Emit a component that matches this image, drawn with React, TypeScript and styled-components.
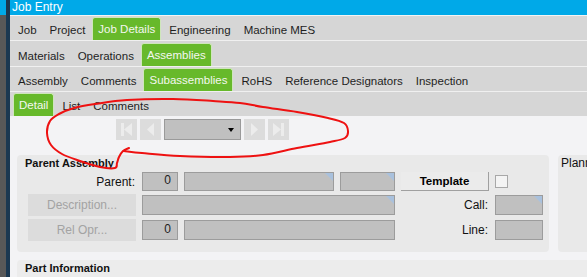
import React from "react";
import styled, { createGlobalStyle, css } from "styled-components";

const GlobalStyle = createGlobalStyle`
  html, body {
    margin: 0;
    padding: 0;
    background: #f3f3f5;
  }
  body {
    font-family: "Liberation Sans", Arial, sans-serif;
  }
  * {
    box-sizing: border-box;
  }
`;

const Screen = styled.div`
  position: relative;
  display: flex;
  width: 587px;
  height: 277px;
  overflow: hidden;
`;

const EdgeStrip = styled.div`
  width: 6px;
  display: flex;
  flex-direction: column;
`;

const EdgeTop = styled.div`
  height: 15px;
  background: #00a9e8;
`;

const EdgeRest = styled.div`
  flex: 1;
  background: #585858;
`;

const EdgeLine = styled.div`
  width: 4px;
  background: #1b3851;
`;

const Main = styled.div`
  flex: 1;
  min-width: 0;
  display: flex;
  flex-direction: column;
`;

const TitleBar = styled.div`
  height: 16px;
  padding-left: 2px;
  background: #00a9e8;
  border-bottom: 1px solid #f4f4f4;
  color: #ffffff;
  font-size: 12px;
  line-height: 15px;
`;

const TabRow = styled.div<{ $last?: boolean; $indent?: number }>`
  height: ${(p) => (p.$last ? 25 : 26)}px;
  display: flex;
  align-items: flex-end;
  gap: 1px;
  padding-left: ${(p) => p.$indent ?? 2}px;
  background: #d6d6d6;
  border-bottom: ${(p) => (p.$last ? "none" : "1px solid #f0f0f0")};
  white-space: nowrap;
`;

const Tab = styled.div<{ $active?: boolean }>`
  height: 23px;
  display: flex;
  align-items: center;
  padding: 3px 6px 0;
  font-size: 11.5px;
  color: #1e1e1e;

  ${(p) =>
    p.$active &&
    css`
      padding: 0 5px;
      margin: 0 1px 0 0;
      background: #67b92b;
      color: #f4f7f0;
      border: 1px solid #cfe6bc;
      border-bottom: none;
      border-radius: 3px 3px 0 0;
    `}
`;

const Content = styled.div`
  flex: 1;
  display: flex;
  flex-direction: column;
  padding-top: 3px;
  background: #f3f3f5;
`;

const NavBar = styled.div`
  display: flex;
  gap: 3px;
  height: 21px;
  padding-left: 106px;
`;

const NavButton = styled.div`
  width: 21px;
  height: 21px;
  background: #dcdcdc;
  display: flex;
  align-items: center;
  justify-content: center;
`;

const Dropdown = styled.div`
  width: 77px;
  height: 21px;
  display: flex;
  align-items: center;
  justify-content: flex-end;
  padding-right: 6px;
  background: #c0c0c0;
  border: 1px solid #9a9a9a;
`;

const DropArrow = styled.div`
  width: 0;
  height: 0;
  border-left: 3.5px solid transparent;
  border-right: 3.5px solid transparent;
  border-top: 4px solid #000000;
  margin-top: 1px;
`;

const GroupRow = styled.div`
  display: flex;
  gap: 9px;
  height: 97px;
  margin-top: 15px;
  padding-left: 7px;
`;

const GroupBox = styled.div<{ $width?: number }>`
  ${(p) => (p.$width ? `width: ${p.$width}px;` : "flex: 1; margin-right: -10px;")}
  flex-shrink: 0;
  overflow: hidden;
  background: #e9e9e9;
  border-radius: 4px;
`;

const GroupTitle = styled.div<{ $plain?: boolean }>`
  height: 17px;
  padding: 1px 0 0 ${(p) => (p.$plain ? 3 : 8)}px;
  font-size: ${(p) => (p.$plain ? 12 : 11)}px;
  font-weight: ${(p) => (p.$plain ? 400 : 700)};
  line-height: 14px;
  color: #111111;
  white-space: nowrap;
`;

const FormGrid = styled.div`
  display: grid;
  grid-template-columns: 108px 36px 150px 55px 88px 48px;
  grid-template-rows: 19px 22px 22px;
  column-gap: 6px;
  row-gap: 3px;
  padding-left: 11px;
`;

const FieldLabel = styled.div`
  align-self: center;
  text-align: right;
  padding-right: 1px;
  font-size: 12px;
  color: #111111;
`;

const Field = styled.div<{ $corner?: boolean; $col?: string; $tall?: boolean }>`
  position: relative;
  grid-column: ${(p) => p.$col ?? "auto"};
  align-self: center;
  height: ${(p) => (p.$tall ? 20 : 19)}px;
  padding-right: 6px;
  background: #c0c0c0;
  border: 1px solid #9c9c9c;
  font-size: 12px;
  line-height: ${(p) => (p.$tall ? 17 : 15)}px;
  text-align: right;
  color: #222222;

  ${(p) =>
    p.$corner &&
    css`
      &::after {
        content: "";
        position: absolute;
        top: 0;
        right: 0;
        border-style: solid;
        border-width: 0 8px 8px 0;
        border-color: transparent #a9c1dd transparent transparent;
      }
    `}
`;

const ActionButton = styled.div`
  display: flex;
  align-items: center;
  justify-content: center;
  background: #dcdcdc;
  color: #a3a3a3;
  font-size: 12px;
`;

const TemplateButton = styled.div`
  display: flex;
  align-items: center;
  justify-content: center;
  background: #ebebeb;
  border-right: 1px solid #a0a0a0;
  border-bottom: 1px solid #a0a0a0;
  font-size: 11.5px;
  font-weight: 700;
  color: #000000;
`;

const CheckBox = styled.div`
  width: 13px;
  height: 13px;
  align-self: center;
  background: #f4f4f4;
  border: 1px solid #a8a8a8;
`;

const PartGroup = styled.div`
  flex: 1;
  margin: 8px 0 0 7px;
  background: #ececec;
  border-radius: 4px 0 0 0;
`;

const Annotation = styled.svg`
  position: absolute;
  left: 0;
  top: 0;
  pointer-events: none;
`;

// hand-drawn loop around the record navigator
const loop: [number, number][] = [
  [129, 148], [123, 151], [119, 157], [117, 163], [115, 168], [100, 167],
  [80, 161], [62, 154], [51, 145], [47, 133], [50, 121], [59, 114],
  [74, 108], [95, 104], [127, 100], [173, 99], [213, 101], [240, 103],
  [263, 107], [297, 112], [328, 118], [344, 123], [348, 131], [345, 138],
  [330, 142], [297, 148], [263, 155], [230, 157], [180, 156], [142, 153],
  [124, 151],
];

function smooth(p: [number, number][]) {
  let d = `M${p[0][0]},${p[0][1]}`;
  for (let i = 0; i < p.length - 1; i++) {
    const p0 = p[i - 1] ?? p[i];
    const p1 = p[i];
    const p2 = p[i + 1];
    const p3 = p[i + 2] ?? p2;
    const c1x = p1[0] + (p2[0] - p0[0]) / 6;
    const c1y = p1[1] + (p2[1] - p0[1]) / 6;
    const c2x = p2[0] - (p3[0] - p1[0]) / 6;
    const c2y = p2[1] - (p3[1] - p1[1]) / 6;
    d += ` C${c1x.toFixed(1)},${c1y.toFixed(1)} ${c2x.toFixed(1)},${c2y.toFixed(1)} ${p2[0]},${p2[1]}`;
  }
  return d;
}

const glyph = "#ececec";

function NavIcon({ kind }: { kind: "first" | "prev" | "next" | "last" }) {
  return (
    <svg width="21" height="21" viewBox="0 0 21 21">
      {kind === "first" && (
        <>
          <rect x="5" y="4" width="3" height="13" fill={glyph} />
          <polygon points="16,4 8,10.5 16,17" fill={glyph} />
        </>
      )}
      {kind === "prev" && <polygon points="14,4 7,10.5 14,17" fill={glyph} />}
      {kind === "next" && <polygon points="7,4 14,10.5 7,17" fill={glyph} />}
      {kind === "last" && (
        <>
          <polygon points="5,4 13,10.5 5,17" fill={glyph} />
          <rect x="13" y="4" width="3" height="13" fill={glyph} />
        </>
      )}
    </svg>
  );
}

export default function App() {
  return (
    <>
      <GlobalStyle />
      <Screen>
        <EdgeStrip>
          <EdgeTop />
          <EdgeRest />
        </EdgeStrip>
        <EdgeLine />
        <Main>
          <TitleBar>Job Entry</TitleBar>
          <TabRow>
            <Tab>Job</Tab>
            <Tab>Project</Tab>
            <Tab $active>Job Details</Tab>
            <Tab>Engineering</Tab>
            <Tab>Machine MES</Tab>
          </TabRow>
          <TabRow>
            <Tab>Materials</Tab>
            <Tab>Operations</Tab>
            <Tab $active>Assemblies</Tab>
          </TabRow>
          <TabRow>
            <Tab>Assembly</Tab>
            <Tab>Comments</Tab>
            <Tab $active>Subassemblies</Tab>
            <Tab>RoHS</Tab>
            <Tab>Reference Designators</Tab>
            <Tab>Inspection</Tab>
          </TabRow>
          <TabRow $last $indent={3}>
            <Tab $active>Detail</Tab>
            <Tab>List</Tab>
            <Tab>Comments</Tab>
          </TabRow>
          <Content>
            <NavBar>
              <NavButton><NavIcon kind="first" /></NavButton>
              <NavButton><NavIcon kind="prev" /></NavButton>
              <Dropdown><DropArrow /></Dropdown>
              <NavButton><NavIcon kind="next" /></NavButton>
              <NavButton><NavIcon kind="last" /></NavButton>
            </NavBar>
            <GroupRow>
              <GroupBox $width={532}>
                <GroupTitle>Parent Assembly</GroupTitle>
                <FormGrid>
                  <FieldLabel>Parent:</FieldLabel>
                  <Field>0</Field>
                  <Field $corner />
                  <Field $corner />
                  <TemplateButton>Template</TemplateButton>
                  <CheckBox />

                  <ActionButton>Description...</ActionButton>
                  <Field $col="2 / 5" $tall $corner />
                  <FieldLabel>Call:</FieldLabel>
                  <Field $tall $corner />

                  <ActionButton>Rel Opr...</ActionButton>
                  <Field $tall>0</Field>
                  <Field $col="3 / 5" $tall />
                  <FieldLabel>Line:</FieldLabel>
                  <Field $tall />
                </FormGrid>
              </GroupBox>
              <GroupBox>
                <GroupTitle $plain>Plann</GroupTitle>
              </GroupBox>
            </GroupRow>
            <PartGroup>
              <GroupTitle>Part Information</GroupTitle>
            </PartGroup>
          </Content>
        </Main>
        <Annotation width="587" height="277" viewBox="0 0 587 277">
          <path
            d={smooth(loop)}
            fill="none"
            stroke="#ee1111"
            strokeWidth="2"
            strokeLinecap="round"
            strokeLinejoin="round"
          />
        </Annotation>
      </Screen>
    </>
  );
}
